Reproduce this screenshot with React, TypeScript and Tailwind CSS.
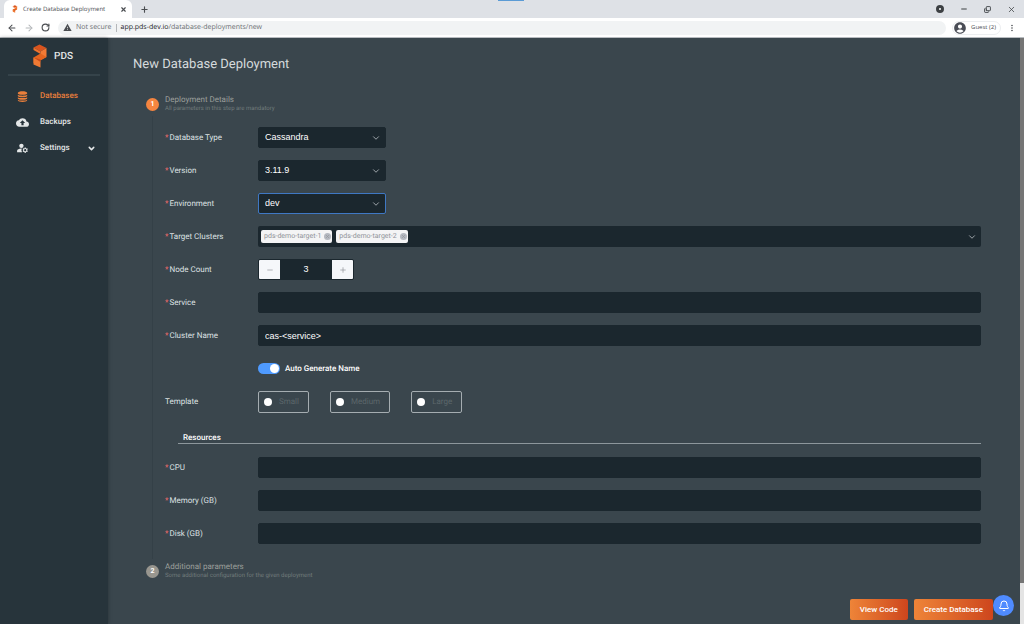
import { useState } from "react";
import type { ReactNode } from "react";
import {
  ArrowLeft,
  ArrowRight,
  Bell,
  ChevronDown,
  Copy,
  Minus,
  Plus,
  RotateCw,
  X,
} from "lucide-react";
import { MdAccountCircle, MdBackup, MdManageAccounts, MdMoreVert, MdWarning } from "react-icons/md";

function Logo({ className }: { className: string }) {
  return (
    <svg viewBox="0 0 14 24" className={className} aria-hidden="true">
      <path d="M0.5 3.5 6.5 0.5 13.5 4 7.5 7.5Z" fill="#d9541e" />
      <path d="M0.5 3.5 7.5 7.5 7.5 10 0.5 6Z" fill="#f0722c" />
      <path d="M7.5 7.5 13.5 4 13.5 13 7.5 16Z" fill="#f27a35" />
      <path d="M0.5 13.5 7.5 9.5 13.5 13 7.5 16.5 0.5 19Z" fill="#e4641f" />
      <path d="M0.5 13.5 7.5 17 7.5 23.5 0.5 20.5Z" fill="#f07a34" />
      <path d="M0.5 13.5 7.5 15.5 7.5 18Z" fill="#c94a1a" />
    </svg>
  );
}

function DatabaseIcon() {
  return (
    <svg viewBox="0 0 20 20" className="h-[11px] w-[11px]" fill="currentColor" aria-hidden="true">
      <path d="M1.5 3.5c0-4 17-4 17 0v1c0 3-17 3-17 0Z" />
      <path d="M1.5 6.8c3 2.2 14 2.2 17 0v2.2c0 3-17 3-17 0Z" />
      <path d="M1.5 11.3c3 2.2 14 2.2 17 0v2.2c0 3-17 3-17 0Z" />
      <path d="M1.5 15.8c3 2.2 14 2.2 17 0v1.2c0 3.8-17 3.8-17 0Z" />
    </svg>
  );
}

function BrowserBar() {
  return (
    <header className="shrink-0 font-['Open_Sans','Noto_Sans',sans-serif] text-[7px] text-[#4a4d51]">
      <div className="flex h-[18px] items-stretch bg-[#dee1e6]">
        <div className="ml-1 flex w-32 items-center rounded-t-md bg-white pr-[5px] pl-2">
          <Logo className="h-2 w-1.5" />
          <span className="ml-[5px] flex-1 text-[6px] whitespace-nowrap">Create Database Deployment</span>
          <button aria-label="Close tab">
            <X className="size-[7px]" strokeWidth={4} />
          </button>
        </div>
        <button aria-label="New tab" className="ml-2">
          <Plus className="size-[9px]" strokeWidth={3} />
        </button>
        <div className="flex flex-1 justify-center">
          <span className="mr-16 h-px w-[26px] bg-[#5b9bd5]" />
        </div>
        <div className="flex items-center gap-4 pr-2 text-[#3c4043]">
          <span className="size-2 rounded-full border-[3px] border-[#3c4043] bg-white" />
          <button aria-label="Minimize">
            <Minus className="size-[8px]" strokeWidth={3} />
          </button>
          <button aria-label="Restore">
            <Copy className="size-[7px] -rotate-90" strokeWidth={3} />
          </button>
          <button aria-label="Close">
            <X className="size-[9px]" strokeWidth={2} />
          </button>
        </div>
      </div>
      <div className="flex h-5 items-center border-b border-[#b8bcc0] bg-white px-[7px]">
        <button aria-label="Back">
          <ArrowLeft className="size-[10px]" strokeWidth={2.5} />
        </button>
        <button aria-label="Forward" className="ml-[7px] text-[#b4b7ba]">
          <ArrowRight className="size-[10px]" strokeWidth={2.5} />
        </button>
        <button aria-label="Reload" className="ml-[7px]">
          <RotateCw className="size-[9px]" strokeWidth={3} />
        </button>
        <div className="ml-2 flex h-[14px] flex-1 items-center rounded-full bg-[#f1f3f4] pl-[5px]">
          <MdWarning className="size-[9px]" />
          <span className="ml-1 border-r border-[#b4b7ba] pr-1 leading-[8px] text-[#6b6f73]">Not secure</span>
          <span className="ml-1 leading-[8px] text-[#202124]">
            app.pds-dev.io<span className="text-[#6b6f73]">/database-deployments/new</span>
          </span>
        </div>
        <button className="ml-1.5 flex h-[14px] items-center rounded-full border border-[#eceef0] pr-1 text-[6px]">
          <MdAccountCircle className="mr-1 size-[14px] text-[#4a4d56]" />
          Guest (2)
        </button>
        <button aria-label="Menu" className="ml-1.5">
          <MdMoreVert className="size-[10px]" />
        </button>
      </div>
    </header>
  );
}

function NavLink({ icon, label, active, expandable }: { icon: ReactNode; label: string; active?: boolean; expandable?: boolean }) {
  return (
    <a href="#" className={`flex h-[26px] items-center pr-3 pl-4 ${active ? "text-[#ea7f3b]" : "text-[#e4e7e8]"}`}>
      <span className="flex w-[13px] justify-center">{icon}</span>
      <span className="ml-[11px] flex-1">{label}</span>
      {expandable && <ChevronDown className="size-[9px]" strokeWidth={4} />}
    </a>
  );
}

function Sidebar() {
  return (
    <aside className="z-10 w-[108px] shrink-0 bg-[#27343b] text-[8px] font-medium shadow-[0_0_4px_rgba(0,0,0,0.3)]">
      <div className="mx-2 flex h-[38px] items-center gap-[7px] border-b-2 border-[#35434a] pl-[25px] text-[10px] text-[#e4e7e8]">
        <Logo className="h-6 w-[14px]" />
        PDS
      </div>
      <nav className="mt-[7px]">
        <NavLink icon={<DatabaseIcon />} label="Databases" active />
        <NavLink icon={<MdBackup className="size-[13px]" />} label="Backups" />
        <NavLink icon={<MdManageAccounts className="size-[14px]" />} label="Settings" expandable />
      </nav>
    </aside>
  );
}

function Row({ label, id, required = true, children }: { label: string; id?: string; required?: boolean; children: ReactNode }) {
  return (
    <div className="flex min-h-[21px] items-center">
      <label htmlFor={id} className="w-[93px] shrink-0 text-[#dde1e3]">
        {required && <span className="mr-px text-[#f56c6c]">*</span>}
        {label}
      </label>
      <div className="min-w-0 flex-1">{children}</div>
    </div>
  );
}

const fieldClass =
  "h-[21px] rounded-xs border bg-[#1b272e] px-1.5 font-['Liberation_Sans',Arial,sans-serif] text-[9px] text-white outline-none";

function SelectField({ id, label, value, active }: { id: string; label: string; value: string; active?: boolean }) {
  return (
    <Row label={label} id={id}>
      <div className="relative w-32">
        <select
          id={id}
          defaultValue={value}
          className={`${fieldClass} block w-full appearance-none ${active ? "border-[#3f78c4]" : "border-[#1b272e]"}`}
        >
          <option>{value}</option>
        </select>
        <ChevronDown className="pointer-events-none absolute top-1.5 right-[5px] size-[10px] text-[#b6bcc0]" />
      </div>
    </Row>
  );
}

function TextField({ id, label, value }: { id: string; label: string; value?: string }) {
  return (
    <Row label={label} id={id}>
      <input id={id} type="text" defaultValue={value} className={`${fieldClass} block w-full border-[#1b272e]`} />
    </Row>
  );
}

function StepHeader({ step, title, hint, active }: { step: number; title: string; hint: string; active?: boolean }) {
  return (
    <div className="flex items-center">
      <span
        className={`flex size-[13px] shrink-0 items-center justify-center rounded-full text-[7px] font-bold text-white ${active ? "bg-[#f58540]" : "bg-[#98968f]"}`}
      >
        {step}
      </span>
      <div className="ml-1.5">
        <h2 className="text-[8px] leading-[9px] text-[#9a9f9b]">{title}</h2>
        <p className="text-[6px] leading-[9px] text-[#717b7b]">{hint}</p>
      </div>
    </div>
  );
}

export default function App() {
  const [targets, setTargets] = useState(["pds-demo-target-1", "pds-demo-target-2"]);
  const [nodes, setNodes] = useState(3);

  return (
    <div className="flex h-screen flex-col overflow-hidden font-[Roboto,sans-serif] [text-rendering:geometricPrecision]">
      <BrowserBar />
      <div className="flex min-h-0 flex-1">
        <Sidebar />
        <main className="flex min-w-0 flex-1 flex-col bg-[#3a464d] pt-[19px] pl-[25px] text-[8px]">
          <h1 className="text-[13px] leading-4 text-[#d5dadc]">New Database Deployment</h1>

          <form className="mt-[22px] mr-[39px] ml-[13px]" onSubmit={(e) => e.preventDefault()}>
            <StepHeader step={1} title="Deployment Details" hint="All parameters in this step are mandatory" active />

            <div className="my-[3px] ml-1.5 flex flex-col gap-3 border-l border-[#344047] pt-[11px] pb-[15px] pl-3">
              <SelectField id="type" label="Database Type" value="Cassandra" />
              <SelectField id="version" label="Version" value="3.11.9" />
              <SelectField id="environment" label="Environment" value="dev" active />

              <Row label="Target Clusters" id="targets">
                <div className="flex h-[21px] items-center gap-1 rounded-xs bg-[#1b272e] pr-1 pl-[3px]">
                  {targets.map((target) => (
                    <span
                      key={target}
                      className="flex h-[13px] items-center gap-[3px] rounded-xs bg-[#f4f4f5] pr-px pl-[3px] text-[7px] text-[#909399]"
                    >
                      {target}
                      <button
                        type="button"
                        aria-label={`Remove ${target}`}
                        className="flex size-[7px] items-center justify-center rounded-full bg-[#b4b8c0]"
                        onClick={() => setTargets(targets.filter((t) => t !== target))}
                      >
                        <X className="size-[5px]" strokeWidth={3} />
                      </button>
                    </span>
                  ))}
                  <input id="targets" type="text" className="min-w-0 flex-1 outline-none" />
                  <ChevronDown className="size-[10px] text-[#b6bcc0]" />
                </div>
              </Row>

              <Row label="Node Count" id="nodes">
                <div className="flex h-[21px] w-24 overflow-hidden rounded-xs border border-[#1b272e] bg-[#1b272e] text-[#909399]">
                  <button
                    type="button"
                    aria-label="Decrease"
                    className="flex w-[21px] items-center justify-center bg-[#f5f7fa]"
                    onClick={() => setNodes(Math.max(1, nodes - 1))}
                  >
                    <Minus className="size-[8px]" />
                  </button>
                  <input
                    id="nodes"
                    type="text"
                    value={nodes}
                    onChange={(e) => setNodes(Number(e.target.value) || 1)}
                    className="w-0 min-w-0 flex-1 text-center font-['Liberation_Sans',Arial,sans-serif] text-[9px] text-white outline-none"
                  />
                  <button
                    type="button"
                    aria-label="Increase"
                    className="flex w-[21px] items-center justify-center bg-[#f5f7fa]"
                    onClick={() => setNodes(nodes + 1)}
                  >
                    <Plus className="size-[8px]" />
                  </button>
                </div>
              </Row>

              <TextField id="service" label="Service" />
              <TextField id="cluster" label="Cluster Name" value="cas-<service>" />

              <Row label="" required={false}>
                <label className="flex items-center gap-[5px] font-medium text-white">
                  <input
                    type="checkbox"
                    defaultChecked
                    className="h-[11px] w-[22px] appearance-none rounded-full bg-[#98a0a5] p-px before:block before:size-[9px] before:rounded-full before:bg-white checked:bg-[#4f9bff] checked:before:ml-[11px]"
                  />
                  Auto Generate Name
                </label>
              </Row>

              <Row label="Template" required={false}>
                <div className="flex gap-[21px]">
                  {["Small", "Medium", "Large"].map((size) => (
                    <label
                      key={size}
                      className="flex h-[22px] items-center gap-[7px] rounded-xs border border-[#a5adb1] pr-[9px] pl-[5px] text-[#5c666b]"
                    >
                      <input
                        type="radio"
                        name="template"
                        className="size-2 appearance-none rounded-full bg-white checked:border-2 checked:border-[#4f9bff]"
                      />
                      {size}
                    </label>
                  ))}
                </div>
              </Row>

              <h3 className="mt-2 mb-px ml-[13px] border-b border-[#8d979c] pl-[5px] leading-[10px] font-medium text-white">
                Resources
              </h3>

              <TextField id="cpu" label="CPU" />
              <TextField id="memory" label="Memory (GB)" />
              <TextField id="disk" label="Disk (GB)" />
            </div>

            <StepHeader step={2} title="Additional parameters" hint="Some additional configuration for the given deployment" />
          </form>

          <div className="mt-auto mr-[27px] mb-1 flex justify-end gap-[6px] font-medium text-white">
            <button className="h-[21px] rounded-xs bg-linear-to-r from-[#ee8438] to-[#cd451d] px-[10px]">View Code</button>
            <button className="h-[21px] rounded-xs bg-linear-to-r from-[#ee8438] to-[#cd451d] px-[10px]">
              Create Database
            </button>
          </div>
        </main>
        <div className="flex w-1 flex-col bg-[#e4e4e4]">
          <div className="h-[93%] bg-[#757575]" />
        </div>
      </div>
      <button
        aria-label="Notifications"
        className="absolute right-[10px] bottom-2 flex size-[21px] items-center justify-center rounded-full bg-[#4f8bff] text-white"
      >
        <Bell className="size-[12px]" />
      </button>
    </div>
  );
}
